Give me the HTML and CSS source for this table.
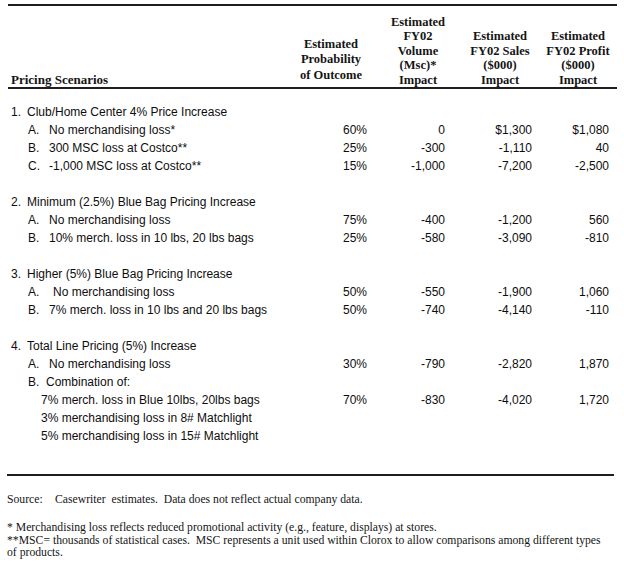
FILE: index.html
```html
<!DOCTYPE html>
<html>
<head>
<meta charset="utf-8">
<link rel="stylesheet" href="styles.css">
</head>
<body>
<div class="sheet">
  <div class="rule-top"></div>
  <div class="head">
    <div class="h-label">Pricing Scenarios</div>
    <div class="h-cell h1">Estimated<br>Probability<br>of Outcome</div>
    <div class="h-cell h2">Estimated<br>FY02<br>Volume<br>(Msc)*<br>Impact</div>
    <div class="h-cell h3">Estimated<br>FY02 Sales<br>($000)<br>Impact</div>
    <div class="h-cell h4">Estimated<br>FY02 Profit<br>($000)<br>Impact</div>
  </div>

  <div class="rows">
    <div class="row sec"><div class="lbl"><span class="num">1.</span>Club/Home Center 4% Price Increase</div></div>
    <div class="row"><div class="lbl sub"><span class="let">A.</span>No merchandising loss*</div><div class="v">60%</div><div class="v">0</div><div class="v">$1,300</div><div class="v">$1,080</div></div>
    <div class="row"><div class="lbl sub"><span class="let">B.</span>300 MSC loss at Costco**</div><div class="v">25%</div><div class="v">-300</div><div class="v">-1,110</div><div class="v">40</div></div>
    <div class="row"><div class="lbl sub"><span class="let">C.</span>-1,000 MSC loss at Costco**</div><div class="v">15%</div><div class="v">-1,000</div><div class="v">-7,200</div><div class="v">-2,500</div></div>
    <div class="row blank"></div>

    <div class="row sec"><div class="lbl"><span class="num">2.</span>Minimum (2.5%) Blue Bag Pricing Increase</div></div>
    <div class="row"><div class="lbl sub"><span class="let">A.</span>No merchandising loss</div><div class="v">75%</div><div class="v">-400</div><div class="v">-1,200</div><div class="v">560</div></div>
    <div class="row"><div class="lbl sub"><span class="let">B.</span>10% merch. loss in 10 lbs, 20 lbs bags</div><div class="v">25%</div><div class="v">-580</div><div class="v">-3,090</div><div class="v">-810</div></div>
    <div class="row blank"></div>

    <div class="row sec"><div class="lbl"><span class="num">3.</span>Higher (5%) Blue Bag Pricing Increase</div></div>
    <div class="row"><div class="lbl sub"><span class="let wide">A.</span>No merchandising loss</div><div class="v">50%</div><div class="v">-550</div><div class="v">-1,900</div><div class="v">1,060</div></div>
    <div class="row"><div class="lbl sub"><span class="let">B.</span>7% merch. loss in 10 lbs and 20 lbs bags</div><div class="v">50%</div><div class="v">-740</div><div class="v">-4,140</div><div class="v">-110</div></div>
    <div class="row blank"></div>

    <div class="row sec"><div class="lbl"><span class="num">4.</span>Total Line Pricing (5%) Increase</div></div>
    <div class="row"><div class="lbl sub"><span class="let">A.</span>No merchandising loss</div><div class="v">30%</div><div class="v">-790</div><div class="v">-2,820</div><div class="v">1,870</div></div>
    <div class="row"><div class="lbl sub"><span class="let narrow">B.</span>Combination of:</div></div>
    <div class="row"><div class="lbl subsub">7% merch. loss in Blue 10lbs, 20lbs bags</div><div class="v">70%</div><div class="v">-830</div><div class="v">-4,020</div><div class="v">1,720</div></div>
    <div class="row"><div class="lbl subsub">3% merchandising loss in 8# Matchlight</div></div>
    <div class="row"><div class="lbl subsub">5% merchandising loss in 15# Matchlight</div></div>
  </div>

  <div class="rule-bottom"></div>

  <div class="foot">
    <p class="source"><span class="src-lbl">Source:</span>Casewriter&nbsp; estimates.&nbsp; Data does not reflect actual company data.</p>
    <p class="note">* Merchandising loss reflects reduced promotional activity (e.g., feature, displays) at stores.<br>**MSC= thousands of statistical cases.&nbsp; MSC represents a unit used within Clorox to allow comparisons among different types of products.</p>
  </div>
</div>
</body>
</html>
```

FILE: styles.css
```css
html, body {
  margin: 0;
  padding: 0;
  background: #ffffff;
}

body {
  padding-top: 4px;
  color: #111111;
}

.sheet {
  margin-left: 8px;
  width: 609px;
}

.rule-top {
  height: 2px;
  background: #1e1e1e;
}

.head {
  display: flex;
  align-items: flex-end;
  height: 81px;
  border-bottom: 2px solid #1e1e1e;
  padding-right: 1px;
  font-family: "Liberation Serif", "Times New Roman", serif;
  font-weight: bold;
  font-size: 12.5px;
  line-height: 14.5px;
  color: #151515;
}

.h-label {
  flex: 1;
  padding-left: 3px;
  font-size: 13px;
}

.h-cell {
  text-align: center;
  white-space: nowrap;
  width: 76px;
}

.h1 {
  width: 70px;
  line-height: 15.5px;
  padding-bottom: 4px;
}

.h2 { margin-left: 14px; }
.h3 { margin-left: 6px; }
.h4 { margin-left: 2px; }

.rows {
  padding-top: 14px;
  font-family: "Liberation Sans", Arial, Helvetica, sans-serif;
  font-size: 12px;
  color: #0d0d0d;
}

.row {
  display: grid;
  grid-template-columns: 1fr 80px 78px 87px 77px;
  height: 18px;
  line-height: 18px;
  padding-left: 3px;
  padding-right: 8px;
  white-space: nowrap;
}

.v {
  text-align: right;
}

.num {
  display: inline-block;
  width: 16px;
}

.sub {
  padding-left: 17px;
}

.let {
  display: inline-block;
  width: 21px;
}

.let.wide { width: 25px; }
.let.narrow { width: 18px; }

.subsub {
  padding-left: 30px;
}

.rule-bottom {
  margin-top: 29px;
  margin-left: -1px;
  width: 607px;
  height: 2px;
  background: #1e1e1e;
}

.foot {
  font-family: "Liberation Serif", "Times New Roman", serif;
  font-size: 11.7px;
  color: #151515;
}

.foot p {
  margin: 0;
}

.source {
  margin-top: 17px !important;
  margin-left: -1px !important;
  line-height: 13px;
}

.src-lbl {
  display: inline-block;
  width: 48px;
}

.note {
  margin-top: 16px !important;
  line-height: 12.5px;
  margin-left: -1px !important;
  width: 602px;
}
```
